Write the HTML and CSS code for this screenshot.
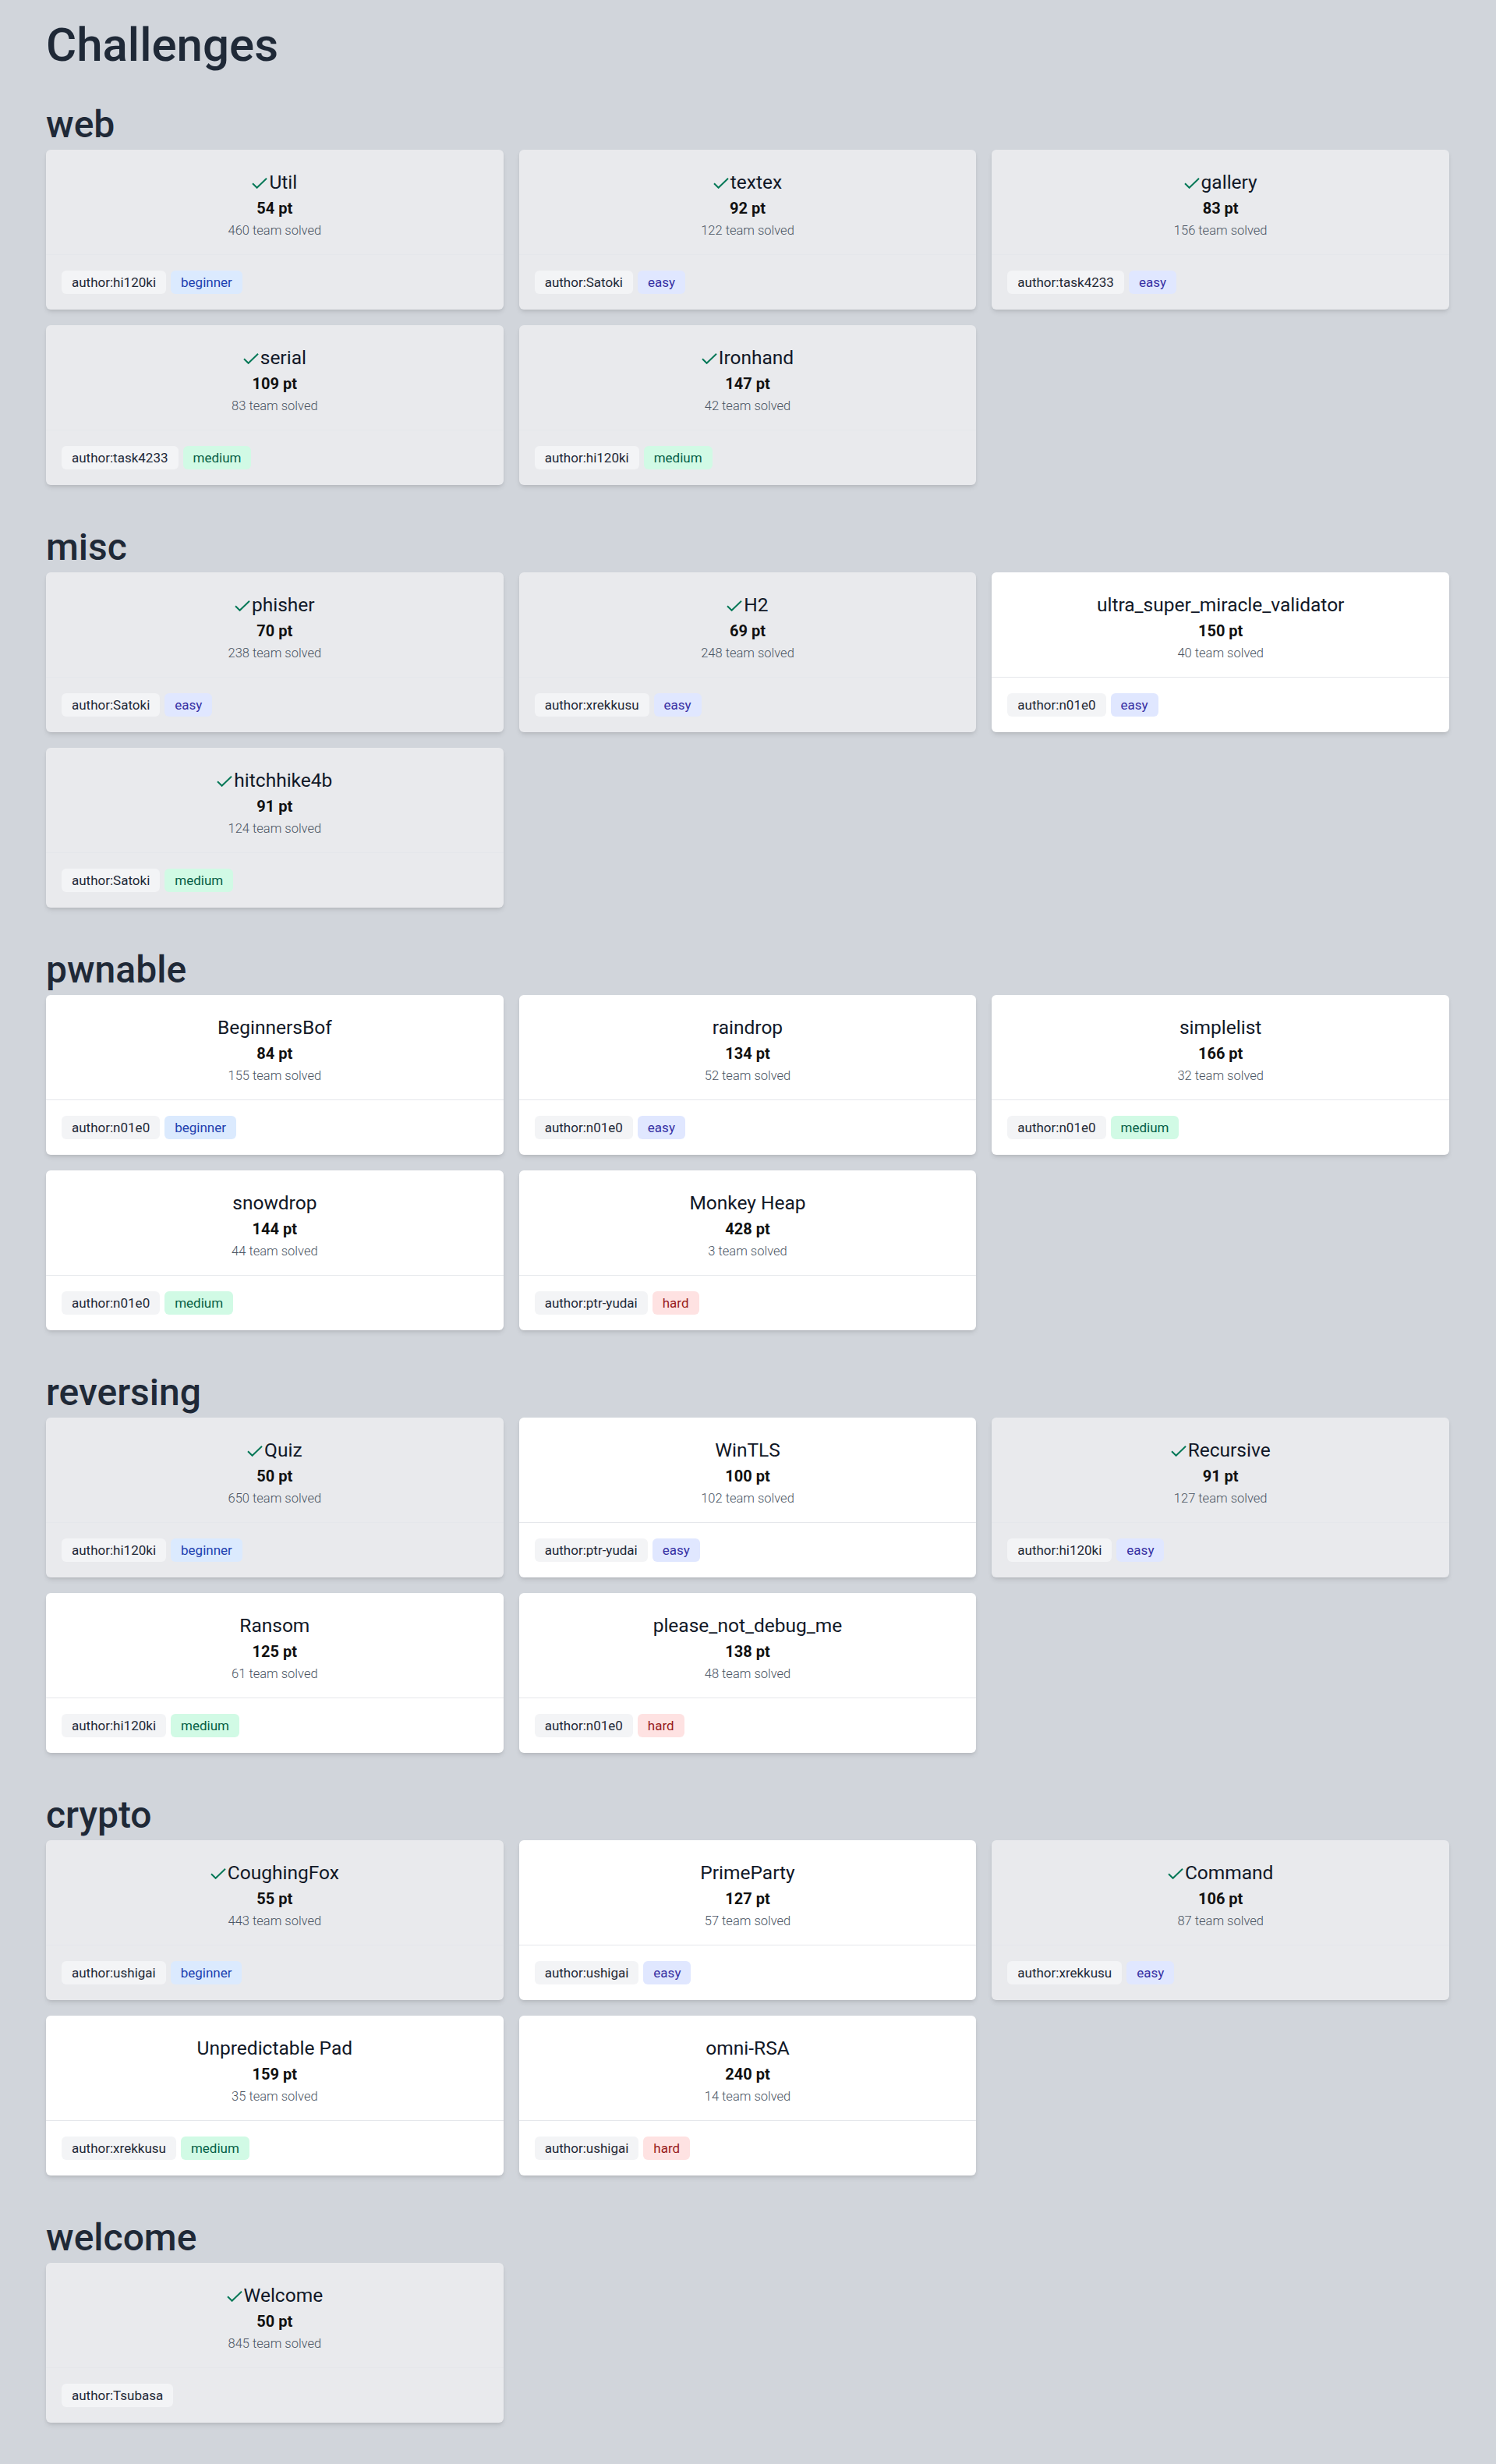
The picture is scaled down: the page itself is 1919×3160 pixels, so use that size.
FILE: index.html
```html
<!DOCTYPE html>
<html lang="en">
<head>
  <meta charset="UTF-8">
  <title>Challenges</title>
  <meta name="viewport" content="width=device-width, initial-scale=1.0">
  <link rel="stylesheet" href="styles.css">
</head>
<body>
  <div class="page">
    <h1>Challenges</h1>

    <section class="section">
      <h2>web</h2>
      <div class="grid">
        <div class="card solved">
          <div class="card-body">
            <div class="title"><svg class="check" viewBox="0 0 20 14"><path d="M1 7.2 L6.6 12.8 L19 0.8"/></svg>Util</div>
            <div class="points">54 pt</div>
            <div class="solves">460 team solved</div>
          </div>
          <div class="card-foot"><span class="tag">author:hi120ki</span><span class="tag beginner">beginner</span></div>
        </div>
        <div class="card solved">
          <div class="card-body">
            <div class="title"><svg class="check" viewBox="0 0 20 14"><path d="M1 7.2 L6.6 12.8 L19 0.8"/></svg>textex</div>
            <div class="points">92 pt</div>
            <div class="solves">122 team solved</div>
          </div>
          <div class="card-foot"><span class="tag">author:Satoki</span><span class="tag easy">easy</span></div>
        </div>
        <div class="card solved">
          <div class="card-body">
            <div class="title"><svg class="check" viewBox="0 0 20 14"><path d="M1 7.2 L6.6 12.8 L19 0.8"/></svg>gallery</div>
            <div class="points">83 pt</div>
            <div class="solves">156 team solved</div>
          </div>
          <div class="card-foot"><span class="tag">author:task4233</span><span class="tag easy">easy</span></div>
        </div>
        <div class="card solved">
          <div class="card-body">
            <div class="title"><svg class="check" viewBox="0 0 20 14"><path d="M1 7.2 L6.6 12.8 L19 0.8"/></svg>serial</div>
            <div class="points">109 pt</div>
            <div class="solves">83 team solved</div>
          </div>
          <div class="card-foot"><span class="tag">author:task4233</span><span class="tag medium">medium</span></div>
        </div>
        <div class="card solved">
          <div class="card-body">
            <div class="title"><svg class="check" viewBox="0 0 20 14"><path d="M1 7.2 L6.6 12.8 L19 0.8"/></svg>Ironhand</div>
            <div class="points">147 pt</div>
            <div class="solves">42 team solved</div>
          </div>
          <div class="card-foot"><span class="tag">author:hi120ki</span><span class="tag medium">medium</span></div>
        </div>
      </div>
    </section>

    <section class="section">
      <h2>misc</h2>
      <div class="grid">
        <div class="card solved">
          <div class="card-body">
            <div class="title"><svg class="check" viewBox="0 0 20 14"><path d="M1 7.2 L6.6 12.8 L19 0.8"/></svg>phisher</div>
            <div class="points">70 pt</div>
            <div class="solves">238 team solved</div>
          </div>
          <div class="card-foot"><span class="tag">author:Satoki</span><span class="tag easy">easy</span></div>
        </div>
        <div class="card solved">
          <div class="card-body">
            <div class="title"><svg class="check" viewBox="0 0 20 14"><path d="M1 7.2 L6.6 12.8 L19 0.8"/></svg>H2</div>
            <div class="points">69 pt</div>
            <div class="solves">248 team solved</div>
          </div>
          <div class="card-foot"><span class="tag">author:xrekkusu</span><span class="tag easy">easy</span></div>
        </div>
        <div class="card">
          <div class="card-body">
            <div class="title">ultra_super_miracle_validator</div>
            <div class="points">150 pt</div>
            <div class="solves">40 team solved</div>
          </div>
          <div class="card-foot"><span class="tag">author:n01e0</span><span class="tag easy">easy</span></div>
        </div>
        <div class="card solved">
          <div class="card-body">
            <div class="title"><svg class="check" viewBox="0 0 20 14"><path d="M1 7.2 L6.6 12.8 L19 0.8"/></svg>hitchhike4b</div>
            <div class="points">91 pt</div>
            <div class="solves">124 team solved</div>
          </div>
          <div class="card-foot"><span class="tag">author:Satoki</span><span class="tag medium">medium</span></div>
        </div>
      </div>
    </section>

    <section class="section">
      <h2>pwnable</h2>
      <div class="grid">
        <div class="card">
          <div class="card-body">
            <div class="title">BeginnersBof</div>
            <div class="points">84 pt</div>
            <div class="solves">155 team solved</div>
          </div>
          <div class="card-foot"><span class="tag">author:n01e0</span><span class="tag beginner">beginner</span></div>
        </div>
        <div class="card">
          <div class="card-body">
            <div class="title">raindrop</div>
            <div class="points">134 pt</div>
            <div class="solves">52 team solved</div>
          </div>
          <div class="card-foot"><span class="tag">author:n01e0</span><span class="tag easy">easy</span></div>
        </div>
        <div class="card">
          <div class="card-body">
            <div class="title">simplelist</div>
            <div class="points">166 pt</div>
            <div class="solves">32 team solved</div>
          </div>
          <div class="card-foot"><span class="tag">author:n01e0</span><span class="tag medium">medium</span></div>
        </div>
        <div class="card">
          <div class="card-body">
            <div class="title">snowdrop</div>
            <div class="points">144 pt</div>
            <div class="solves">44 team solved</div>
          </div>
          <div class="card-foot"><span class="tag">author:n01e0</span><span class="tag medium">medium</span></div>
        </div>
        <div class="card">
          <div class="card-body">
            <div class="title">Monkey Heap</div>
            <div class="points">428 pt</div>
            <div class="solves">3 team solved</div>
          </div>
          <div class="card-foot"><span class="tag">author:ptr-yudai</span><span class="tag hard">hard</span></div>
        </div>
      </div>
    </section>

    <section class="section">
      <h2>reversing</h2>
      <div class="grid">
        <div class="card solved">
          <div class="card-body">
            <div class="title"><svg class="check" viewBox="0 0 20 14"><path d="M1 7.2 L6.6 12.8 L19 0.8"/></svg>Quiz</div>
            <div class="points">50 pt</div>
            <div class="solves">650 team solved</div>
          </div>
          <div class="card-foot"><span class="tag">author:hi120ki</span><span class="tag beginner">beginner</span></div>
        </div>
        <div class="card">
          <div class="card-body">
            <div class="title">WinTLS</div>
            <div class="points">100 pt</div>
            <div class="solves">102 team solved</div>
          </div>
          <div class="card-foot"><span class="tag">author:ptr-yudai</span><span class="tag easy">easy</span></div>
        </div>
        <div class="card solved">
          <div class="card-body">
            <div class="title"><svg class="check" viewBox="0 0 20 14"><path d="M1 7.2 L6.6 12.8 L19 0.8"/></svg>Recursive</div>
            <div class="points">91 pt</div>
            <div class="solves">127 team solved</div>
          </div>
          <div class="card-foot"><span class="tag">author:hi120ki</span><span class="tag easy">easy</span></div>
        </div>
        <div class="card">
          <div class="card-body">
            <div class="title">Ransom</div>
            <div class="points">125 pt</div>
            <div class="solves">61 team solved</div>
          </div>
          <div class="card-foot"><span class="tag">author:hi120ki</span><span class="tag medium">medium</span></div>
        </div>
        <div class="card">
          <div class="card-body">
            <div class="title">please_not_debug_me</div>
            <div class="points">138 pt</div>
            <div class="solves">48 team solved</div>
          </div>
          <div class="card-foot"><span class="tag">author:n01e0</span><span class="tag hard">hard</span></div>
        </div>
      </div>
    </section>

    <section class="section">
      <h2>crypto</h2>
      <div class="grid">
        <div class="card solved">
          <div class="card-body">
            <div class="title"><svg class="check" viewBox="0 0 20 14"><path d="M1 7.2 L6.6 12.8 L19 0.8"/></svg>CoughingFox</div>
            <div class="points">55 pt</div>
            <div class="solves">443 team solved</div>
          </div>
          <div class="card-foot"><span class="tag">author:ushigai</span><span class="tag beginner">beginner</span></div>
        </div>
        <div class="card">
          <div class="card-body">
            <div class="title">PrimeParty</div>
            <div class="points">127 pt</div>
            <div class="solves">57 team solved</div>
          </div>
          <div class="card-foot"><span class="tag">author:ushigai</span><span class="tag easy">easy</span></div>
        </div>
        <div class="card solved">
          <div class="card-body">
            <div class="title"><svg class="check" viewBox="0 0 20 14"><path d="M1 7.2 L6.6 12.8 L19 0.8"/></svg>Command</div>
            <div class="points">106 pt</div>
            <div class="solves">87 team solved</div>
          </div>
          <div class="card-foot"><span class="tag">author:xrekkusu</span><span class="tag easy">easy</span></div>
        </div>
        <div class="card">
          <div class="card-body">
            <div class="title">Unpredictable Pad</div>
            <div class="points">159 pt</div>
            <div class="solves">35 team solved</div>
          </div>
          <div class="card-foot"><span class="tag">author:xrekkusu</span><span class="tag medium">medium</span></div>
        </div>
        <div class="card">
          <div class="card-body">
            <div class="title">omni-RSA</div>
            <div class="points">240 pt</div>
            <div class="solves">14 team solved</div>
          </div>
          <div class="card-foot"><span class="tag">author:ushigai</span><span class="tag hard">hard</span></div>
        </div>
      </div>
    </section>

    <section class="section">
      <h2>welcome</h2>
      <div class="grid">
        <div class="card solved">
          <div class="card-body">
            <div class="title"><svg class="check" viewBox="0 0 20 14"><path d="M1 7.2 L6.6 12.8 L19 0.8"/></svg>Welcome</div>
            <div class="points">50 pt</div>
            <div class="solves">845 team solved</div>
          </div>
          <div class="card-foot"><span class="tag">author:Tsubasa</span></div>
        </div>
      </div>
    </section>
  </div>
</body>
</html>
```

FILE: styles.css
```css
* {
  box-sizing: border-box;
}
body {
  margin: 0;
  background: #d1d5db;
  font-family: Roboto, "Noto Sans", sans-serif;
  color: #111827;
}
.page {
  padding: 28px 60px 50px 59px;
}
h1 {
  margin: 0 0 48px;
  font-size: 60px;
  line-height: 60px;
  font-weight: 500;
  color: #1f2937;
}
.section + .section {
  margin-top: 56px;
}
.section h2 {
  margin: 0 0 8px;
  font-size: 48px;
  line-height: 48px;
  font-weight: 500;
  color: #1f2937;
}
.grid {
  display: grid;
  grid-template-columns: repeat(3, 1fr);
  gap: 20px;
}
.card {
  display: flex;
  flex-direction: column;
  background: #fff;
  border-radius: 6px;
  box-shadow: 0 4px 6px -1px rgba(0,0,0,0.1), 0 2px 4px -1px rgba(0,0,0,0.06);
}
.card.solved {
  background: #e9eaed;
}
.card-body {
  padding: 24px 16px 16px;
  text-align: center;
}
.title {
  font-size: 24.5px;
  line-height: 36px;
  color: #111827;
}
.check {
  width: 20px;
  height: 14px;
  margin-right: 2px;
  vertical-align: baseline;
  fill: none;
  stroke: #047857;
  stroke-width: 2;
}
.points {
  font-size: 20px;
  line-height: 30px;
  font-weight: 700;
  color: #111;
}
.solves {
  font-size: 16.5px;
  line-height: 28px;
  font-weight: 300;
  color: #4b5563;
}
.card-foot {
  display: flex;
  gap: 6px;
  padding: 20px;
  border-top: 1px solid #e5e7eb;
}
.tag {
  padding: 0 13px;
  font-size: 17px;
  line-height: 30px;
  border-radius: 6px;
  background: #f3f4f6;
  color: #1f2937;
}
.tag.beginner {
  background: #dbeafe;
  color: #1e40af;
}
.tag.easy {
  background: #e0e7ff;
  color: #3730a3;
}
.tag.medium {
  background: #d1fae5;
  color: #065f46;
}
.tag.hard {
  background: #fee2e2;
  color: #991b1b;
}
```
